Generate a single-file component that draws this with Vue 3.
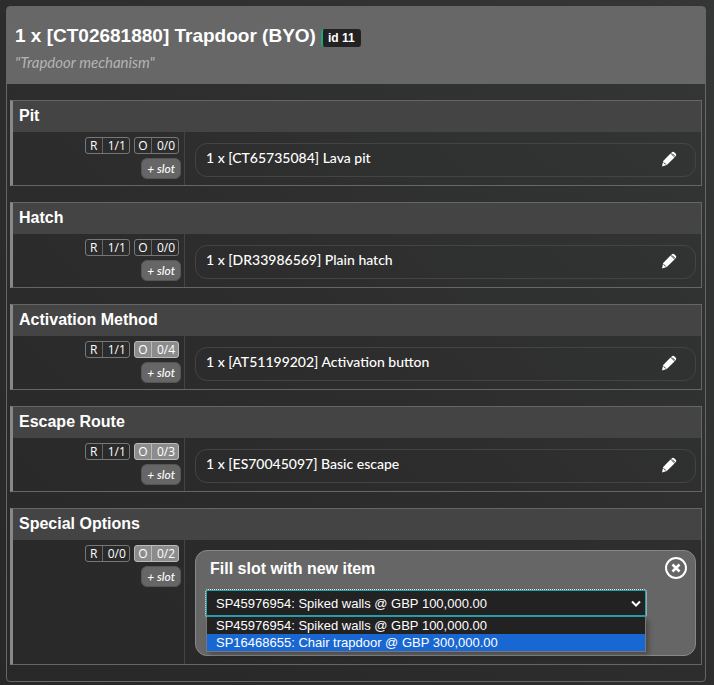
<script setup>
import { ref } from 'vue'

const groups = [
  { title: 'Pit', required: '1/1', optional: '0/0', open: false, item: '1 x [CT65735084] Lava pit' },
  { title: 'Hatch', required: '1/1', optional: '0/0', open: false, item: '1 x [DR33986569] Plain hatch' },
  { title: 'Activation Method', required: '1/1', optional: '0/4', open: true, item: '1 x [AT51199202] Activation button' },
  { title: 'Escape Route', required: '1/1', optional: '0/3', open: true, item: '1 x [ES70045097] Basic escape' },
  { title: 'Special Options', required: '0/0', optional: '0/2', open: true, item: null }
]

const options = [
  'SP45976954: Spiked walls @ GBP 100,000.00',
  'SP16468655: Chair trapdoor @ GBP 300,000.00'
]
const selected = ref(options[0])
const highlighted = ref(1)
</script>

<template>
  <main class="page">
    <article class="card">
      <header class="card-head">
        <div class="title-row">
          <h1>1 x [CT02681880] Trapdoor (BYO)</h1>
          <span class="id-tag">id 11</span>
        </div>
        <p class="subtitle">"Trapdoor mechanism"</p>
      </header>

      <div class="groups">
        <section v-for="g in groups" :key="g.title" class="group">
          <h2>{{ g.title }}</h2>
          <div class="group-body">
            <div class="slots">
              <div class="counts">
                <span class="count"><b>R</b><i>{{ g.required }}</i></span>
                <span class="count" :class="{ free: g.open }"><b>O</b><i>{{ g.optional }}</i></span>
              </div>
              <button type="button" class="add-slot">+ slot</button>
            </div>

            <div v-if="g.item" class="item">
              <span>{{ g.item }}</span>
              <button type="button" class="icon-button" aria-label="Edit item">
                <svg width="16" height="16" viewBox="0 0 16 16" aria-hidden="true">
                  <path fill="#fff" d="M9.5 2.500 13.500 6.500 5.800 14 1 15.500 2.200 10z" />
                  <path fill="#fff" d="M10 2.200 11.200 1.100Q12.200.300 13.200 1.200L14.800 2.800Q15.700 3.900 14.800 4.900L13.700 6.100z" />
                  <path fill="none" stroke="#303030" stroke-width="1" d="M11.200 2.600 13.600 5M2.600 11.300 4.900 13.600" />
                </svg>
              </button>
            </div>

            <div v-else class="fill">
              <div class="fill-head">
                <label for="new-item">Fill slot with new item</label>
                <button type="button" class="icon-button" aria-label="Close">
                  <svg width="22" height="22" viewBox="0 0 22 22" aria-hidden="true">
                    <circle cx="11" cy="11" r="10" fill="none" stroke="#fff" stroke-width="2" />
                    <path d="M7.500 7.500 14.500 14.500M14.500 7.500 7.500 14.500" stroke="#fff" stroke-width="2.600" />
                  </svg>
                </button>
              </div>
              <div class="picker">
                <select id="new-item" v-model="selected">
                  <option v-for="o in options" :key="o">{{ o }}</option>
                </select>
                <svg class="chevron" width="10" height="8" viewBox="0 0 10 8" aria-hidden="true">
                  <path d="M1 1.500 5 5.500 9 1.500" fill="none" stroke="#fff" stroke-width="2" />
                </svg>
                <ul class="menu">
                  <li v-for="(o, i) in options" :key="o" :class="{ active: i === highlighted }">{{ o }}</li>
                </ul>
              </div>
            </div>
          </div>
        </section>
      </div>
    </article>
  </main>
</template>

<style>
body {
  margin: 0;
  background: linear-gradient(to top right, #282828, #2d2d2d 50%, #343736);
}
</style>

<style scoped>
* {
  box-sizing: border-box;
}

.page {
  padding: 6px 8px 3px 6px;
  color: #fff;
  font: 14px/18px Lato, "Noto Sans", sans-serif;
}

.card {
  border: 1px solid #666;
  border-radius: 4px;
}

.card-head {
  height: 77px;
  padding: 16px 8px 0;
  background: #676767;
}

.title-row {
  display: flex;
  align-items: center;
  gap: 5px;
}

h1,
h2,
p {
  margin: 0;
}

h1 {
  font: bold 19px/26px "Liberation Sans", Arial, sans-serif;
}

.id-tag {
  margin-top: 4px;
  padding: 0 6px 0 5px;
  border-left: 2px solid #1fa67d;
  border-radius: 3px;
  background: #222;
  font: bold 12px/18px "Liberation Sans", Arial, sans-serif;
}

.subtitle {
  padding-top: 4px;
  color: #b4b4b4;
  font-size: 15px;
  font-style: italic;
}

.groups {
  display: flex;
  flex-direction: column;
  gap: 16px;
  padding: 16px 3px;
}

.group {
  border: 1px solid #666;
  border-left: 3px solid #888;
}

h2 {
  height: 31px;
  padding: 0 6px;
  background: #444;
  font: bold 16px/29px "Liberation Sans", Arial, sans-serif;
}

.group-body {
  display: grid;
  grid-template-columns: 172px minmax(0, 1fr);
}

.slots {
  display: flex;
  flex-direction: column;
  align-items: flex-end;
  gap: 4px;
  padding: 5px 3px 5px 0;
  border-right: 1px solid #444;
}

.counts {
  display: flex;
  gap: 4px;
  padding-right: 2px;
}

.count {
  display: flex;
  border: 1px solid #777;
  border-radius: 3px;
  font: 12px/15px "Open Sans", "Noto Sans", sans-serif;
}

.count b {
  width: 17px;
  border-right: 1px solid #666;
  font-weight: 400;
  text-align: center;
}

.count i {
  padding: 0 3px 0 5px;
  font-style: normal;
}

.count.free {
  border-color: #bbb;
  background: #8c8c8c;
}

.count.free b {
  border-color: #bbb;
}

.add-slot {
  height: 21px;
  padding: 0 5px;
  border: 1px solid #555;
  border-radius: 6px;
  background: #666;
  color: #fff;
  font: italic 500 12px/18px Lato, "Noto Sans", sans-serif;
}

.item {
  display: flex;
  align-items: center;
  justify-content: space-between;
  height: 34px;
  margin: 11px 5px 8px 10px;
  padding: 0 18px 2px 10px;
  border: 1px solid #444;
  border-radius: 12px;
  font-weight: 500;
  line-height: 20px;
}

.item span {
  padding-bottom: 2px;
}

.icon-button {
  display: flex;
  padding: 0;
  border: 0;
  background: none;
}

.fill {
  height: 106px;
  margin: 10px 5px 8px 10px;
  padding: 4px 8px 0 9px;
  border: 1px solid #888;
  border-radius: 12px;
  background: #666;
}

.fill-head {
  display: flex;
  align-items: center;
  justify-content: space-between;
  padding-left: 5px;
  font: bold 16px/24px "Liberation Sans", Arial, sans-serif;
}

.fill-head label {
  padding-top: 2px;
}

.picker {
  position: relative;
  margin: 9px 41px 0 1px;
  font: 13px/17px "Liberation Sans", Arial, sans-serif;
}

select {
  display: block;
  width: 100%;
  height: 27px;
  padding: 0 9px;
  appearance: none;
  border: 1px solid #2b9fab;
  border-bottom-width: 2px;
  border-radius: 2px;
  outline: 1px dotted #d5eef0;
  background: #222;
  color: #fff;
  font: inherit;
}

.chevron {
  position: absolute;
  top: 10px;
  right: 5px;
}

.menu {
  position: absolute;
  top: 27px;
  left: 0;
  right: 0;
  margin: 0;
  padding: 0;
  list-style: none;
  border: 1px solid #777;
  border-top: 0;
  background: #222;
  box-shadow: 3px 3px 5px #0004;
}

.menu li {
  padding: 0 9px;
}

.menu .active {
  background: #1967d2;
}
</style>
